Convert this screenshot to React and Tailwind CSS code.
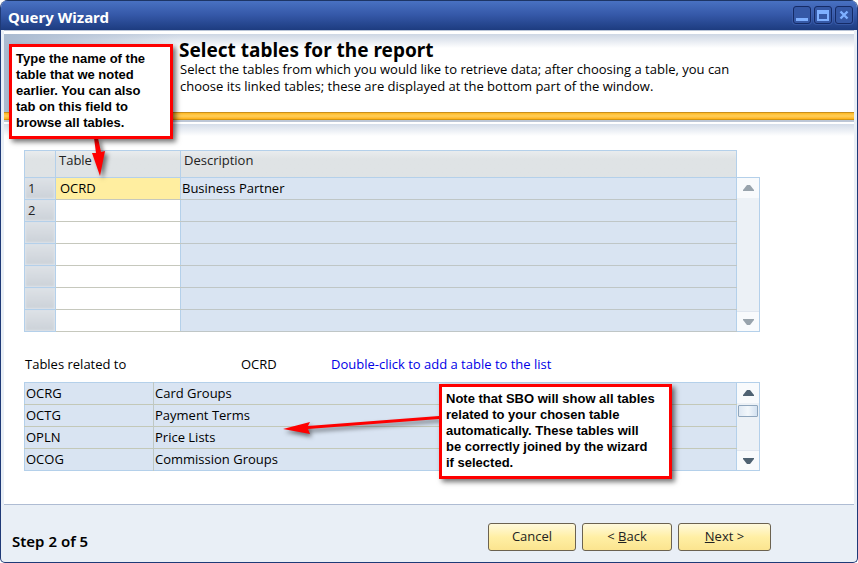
import { useState } from "react";

const RELATED_TABLES = [
  { code: "OCRG", name: "Card Groups" },
  { code: "OCTG", name: "Payment Terms" },
  { code: "OPLN", name: "Price Lists" },
  { code: "OCOG", name: "Commission Groups" },
];

function TitleBar() {
  const buttonClasses =
    "flex h-[18px] w-[18px] items-center justify-center rounded-[3px] border border-[#152b66] bg-[#3558a6] text-[#7fb0ff] shadow-[0_0_0_1px_rgba(70,104,184,0.5)]";

  return (
    <header className="flex h-[30px] items-center justify-between bg-linear-to-b from-[#4a73c4] via-[#3558a8] to-[#1d3c80] pr-1 pl-[7px] shadow-[inset_0_1px_0_#1d3565]">
      <h1 className="pt-1 font-['Noto_Sans'] text-[15px] font-bold text-white">Query Wizard</h1>
      <div className="flex gap-[3px]">
        <button aria-label="Minimize" className={buttonClasses}>
          <svg width="14" height="14" viewBox="0 0 14 14" fill="currentColor">
            <rect x="1" y="10" width="12" height="3" />
          </svg>
        </button>
        <button aria-label="Maximize" className={buttonClasses}>
          <svg width="14" height="14" viewBox="0 0 14 14" fill="currentColor">
            <path fillRule="evenodd" d="M1 2h12v11H1zM3 6v5h8V6z" />
          </svg>
        </button>
        <button aria-label="Close" className={buttonClasses}>
          <svg width="14" height="14" viewBox="0 0 14 14" stroke="currentColor" strokeWidth="2.4">
            <path d="M3.500 3.500l7 7M10.500 3.500l-7 7" />
          </svg>
        </button>
      </div>
    </header>
  );
}

function ScrollBar({ active }) {
  const arrow = active ? "text-[#4f6272]" : "text-[#98a3ac]";

  return (
    <div className="flex w-[23px] flex-col border border-l-0 border-[#b4d0ea] bg-[#ecf1f6]">
      <button aria-label="Scroll up" className={`flex h-[20px] items-center justify-center bg-[#f8fafc] ${arrow}`}>
        <svg width="11" height="6" viewBox="0 0 11 6" fill="currentColor">
          <path d="M4 0h3L11 5v1H0V5z" />
        </svg>
      </button>
      <div className="flex-1 px-px pt-[2px]">
        {active && (
          <div className="h-3 rounded-[1px] border border-[#8fa6bd] bg-linear-to-r from-[#dfe9f4] via-[#f2f7fb] to-[#d3e1f0]" />
        )}
      </div>
      <button
        aria-label="Scroll down"
        className={`flex h-[20px] items-center justify-center border-t border-[#e0e6ef] bg-[#f8fafc] ${arrow}`}
      >
        <svg width="11" height="6" viewBox="0 0 11 6" fill="currentColor">
          <path d="M0 0h11v1L7 6H4L0 1z" />
        </svg>
      </button>
    </div>
  );
}

function Callout({ className, children }) {
  return (
    <aside
      className={`absolute z-10 border-3 border-[#fe0000] bg-white pt-1 pl-1 font-['Liberation_Sans'] text-[13px] leading-4 font-bold whitespace-nowrap text-black shadow-[3px_3px_5px_rgba(0,0,0,0.55)] ${className}`}
    >
      {children}
    </aside>
  );
}

function WizardButton({ className, children }) {
  return (
    <button
      className={`h-7 rounded-[3px] border border-[#6b6250] bg-linear-to-b from-[#fff9dc] via-[#ffefa4] to-[#fbe48f] text-[#222] ${className}`}
    >
      {children}
    </button>
  );
}

export default function App() {
  const [tables, setTables] = useState(["OCRD", "", "", "", "", "", ""]);

  const handleTableChange = (index, value) => {
    setTables(tables.map((t, i) => (i === index ? value : t)));
  };

  return (
    <div className="relative flex min-h-screen flex-col overflow-hidden rounded-t-lg rounded-b-[5px] border border-t-0 border-[#1f3a77] bg-[#e9eff6] font-['Open_Sans'] text-[13px] leading-[17px] text-black">
      <TitleBar />

      <main className="mx-[3px] flex flex-1 flex-col border-t border-[#b9c4d6] bg-white">
        <section className="mt-[3px] bg-[linear-gradient(to_right,#a9bad0,#a9bad000_175px),linear-gradient(to_bottom,#cdd6e4,#ffffff_14px)] pt-[5px] pl-[175px]">
          <h2 className="font-['Noto_Sans'] text-[19px] leading-[22px] font-bold">Select tables for the report</h2>
          <p className="h-[51px] max-w-[565px] pl-px">
            Select the tables from which you would like to retrieve data; after choosing a table, you can
            <br />
            choose its linked tables; these are displayed at the bottom part of the window.
          </p>
        </section>
        <div className="h-2 border-t border-b border-t-[#c98f1c] border-b-[#d39612] bg-linear-to-b from-[#ffb81c] via-[#ffcf58] to-[#ffb00a]" />
        <div className="mb-[2px] h-[2px] bg-[#bcc6d6]" />

        <section className="relative flex-1 border-b border-[#aebcd3] bg-linear-to-b from-[#d5dde9] to-white to-[12px] px-5 pt-[26px] pb-[33px]">
          <div className="flex items-end pr-[74px]">
            <table className="flex-1 table-fixed border-collapse border border-[#b4d0ea] text-left">
              <colgroup>
                <col className="w-[31px]" />
                <col className="w-[125px]" />
                <col />
              </colgroup>
              <thead>
                <tr className="h-[27px] bg-linear-to-b from-[#e9ecee] to-[#dfe3e5] to-[8px] text-[#222]">
                  <th className="border border-[#b4d0ea]" />
                  <th className="border border-[#b4d0ea] px-[3px] pt-0 pb-2 font-normal">Table</th>
                  <th className="border border-[#b4d0ea] px-[3px] pt-0 pb-2 font-normal">Description</th>
                </tr>
              </thead>
              <tbody>
                {tables.map((table, i) => (
                  <tr key={i} className="h-[22px]">
                    <td className="border border-[#b4d0ea] bg-linear-to-b from-[#dde1e6] to-[#cbd1d8] px-[3px] text-[#222] shadow-[inset_0_0_2px_1px_#dde3e9]">
                      {i < 2 ? i + 1 : ""}
                    </td>
                    <td className={`border border-[#b4d0ea] border-y-[#c6c8bd] p-0 ${i === 0 ? "bg-[#ffeea0]" : "bg-white"}`}>
                      <input
                        aria-label={`Table ${i + 1}`}
                        value={table}
                        onChange={(e) => handleTableChange(i, e.target.value)}
                        className="block h-[21px] w-full pb-[2px] pl-1 outline-none"
                      />
                    </td>
                    <td className="border border-[#b4d0ea] border-y-[#bfc6c6] bg-[#d9e4f2] px-px py-0">
                      {i === 0 ? "Business Partner" : ""}
                    </td>
                  </tr>
                ))}
              </tbody>
            </table>
            <div className="flex h-[155px]">
              <ScrollBar />
            </div>
          </div>

          <div className="mt-6 flex h-[26px] pl-px">
            <span className="w-[216px]">Tables related to</span>
            <span className="w-[90px]">OCRD</span>
            <span className="text-[#0000e6]">Double-click to add a table to the list</span>
          </div>

          <div className="flex pr-[74px]">
            <table className="flex-1 table-fixed border-collapse border border-[#b4d0ea] bg-[#d9e4f2]">
              <colgroup>
                <col className="w-[129px]" />
                <col />
              </colgroup>
              <tbody>
                {RELATED_TABLES.map((t) => (
                  <tr key={t.code} className="h-[22px] border-b border-[#c3c8b8] last:border-[#b4d0ea]">
                    <td className="border-r border-[#bfc8c4] px-px py-0">{t.code}</td>
                    <td className="px-px py-0">{t.name}</td>
                  </tr>
                ))}
              </tbody>
            </table>
            <ScrollBar active />
          </div>

          <Callout className="top-[260px] left-[435px] h-[95px] w-[233px]">
            Note that SBO will show all tables
            <br />
            related to your chosen table
            <br />
            automatically. These tables will
            <br />
            be correctly joined by the wizard
            <br />
            if selected.
          </Callout>
          <svg
            className="absolute top-[285px] left-[278px] drop-shadow-[2px_3px_2px_rgba(0,0,0,0.5)]"
            width="160"
            height="40"
            viewBox="0 0 160 40"
            fill="#fe0000"
          >
            <path d="M1 20L28 13L26 17L157 7V10L26 20L28 25Z" />
          </svg>
        </section>
      </main>

      <footer className="mt-[2px] flex h-[55px] items-center justify-between pr-[86px] pb-px pl-[11px]">
        <span className="pt-[14px] font-['Noto_Sans'] text-[15px] font-semibold">Step 2 of 5</span>
        <div className="flex gap-[6px] pt-[5px]">
          <WizardButton className="w-[88px]">Cancel</WizardButton>
          <WizardButton className="w-[90px]">
            &lt; <u>B</u>ack
          </WizardButton>
          <WizardButton className="w-[93px]">
            <u>N</u>ext &gt;
          </WizardButton>
        </div>
      </footer>

      <Callout className="top-[44px] left-2 h-[95px] w-[164px]">
        Type the name of the
        <br />
        table that we noted
        <br />
        earlier. You can also
        <br />
        tab on this field to
        <br />
        browse all tables.
      </Callout>
      <svg
        className="absolute top-[138px] left-[84px] drop-shadow-[3px_3px_2px_rgba(0,0,0,0.5)]"
        width="30"
        height="42"
        viewBox="0 0 30 42"
        fill="#fe0000"
      >
        <path d="M9 0h4l3 14l4-1L15 38L7 15l4 0z" />
      </svg>
    </div>
  );
}
